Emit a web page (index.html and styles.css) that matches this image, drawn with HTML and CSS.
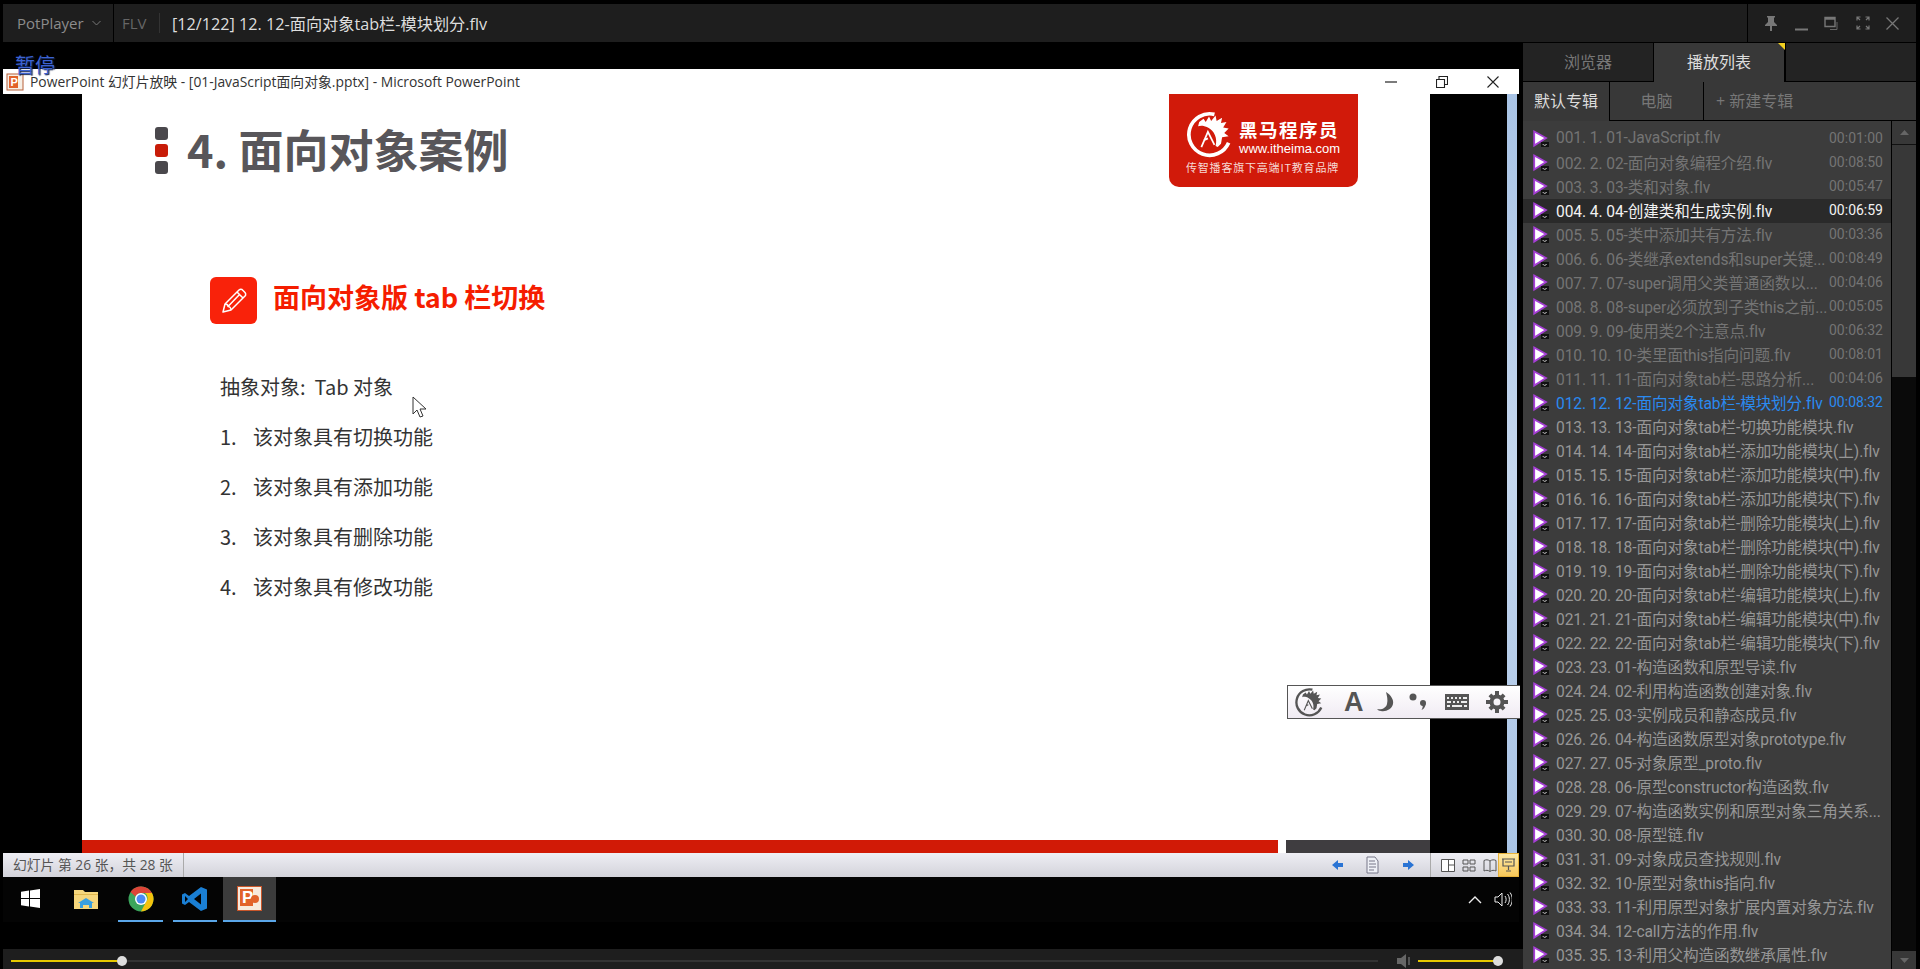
FILE: index.html
```html
<!DOCTYPE html>
<html lang="zh-CN">
<head>
    <meta charset="UTF-8">
    <title>PotPlayer</title>
    <link rel="stylesheet" href="styles.css">
</head>
<body>

<svg class="defs" width="0" height="0">
    <symbol id="play" viewBox="0 0 16 18">
        <polygon points="1.2,1.5 13,8 1.2,15.5" fill="#fff" stroke="#a63fd6" stroke-width="1.8"/>
        <rect x="8" y="12" width="8" height="5" fill="#111"/>
        <path d="M9.5 14.5h1.5v1h1.5v-1h1.5" stroke="#bbb" stroke-width=".7" fill="none"/>
    </symbol>
    <symbol id="horse" viewBox="0 0 44 44">
        <path d="M27 4A19 19 0 1 0 40 30" fill="none" stroke="currentColor" stroke-width="3.4"/>
        <path d="M13 11l4-3 2 3 3-5 2 4 4-5 1 5 5-3-1 5 5-1-3 5 5 1-4 4 4 3-6 1-1 6-3 3-2-1c2-7-1-14-7-17-4-2-7-2-9-1z" fill="currentColor"/>
        <path d="M15 34l6-14 6 12M21 26l-4 2" fill="none" stroke="currentColor" stroke-width="1.6"/>
    </symbol>
</svg>

<!-- Top bar -->
<div class="topbar">
    <div class="brand">PotPlayer
        <svg width="9" height="6" viewBox="0 0 9 6"><path d="M.5 1l4 4 4-4" fill="none" stroke="#777"/></svg>
    </div>
    <div class="format">FLV</div>
    <div class="now-title">[12/122] 12. 12-面向对象tab栏-模块划分.flv</div>
    <div class="win-controls">
        <svg width="14" height="15" viewBox="0 0 14 15"><path d="M3 0h8v1l-1 1v4l3 3v1H8v5H6v-5H1V9l3-3V2L3 1z" fill="#777"/></svg>
        <svg width="13" height="15" viewBox="0 0 13 15"><path d="M0 13.5h13" stroke="#777" stroke-width="2"/></svg>
        <svg width="15" height="15" viewBox="0 0 15 15"><path d="M1 1.5h10v9H1z M1 3h10" fill="none" stroke="#777" stroke-width="1.4"/><path d="M13 6v7.5H6" fill="none" stroke="#666"/></svg>
        <svg width="14" height="14" viewBox="0 0 14 14"><path d="M1 4.500V1h3.500M9.500 1H13v3.500M13 9.500V13H9.500M4.500 13H1V9.500M1 1l3 3M13 1l-3 3M13 13l-3-3M1 13l3-3" fill="none" stroke="#777" stroke-width="1.2"/></svg>
        <svg width="13" height="13" viewBox="0 0 13 13"><path d="M.5.500l12 12M12.500.500l-12 12" stroke="#777" stroke-width="1.3"/></svg>
    </div>
</div>

<div class="main">

    <!-- Video area -->
    <div class="video">
        <div class="osd">暂停</div>

        <div class="ppt-window">
            <div class="ppt-title">
                <svg width="18" height="18" viewBox="0 0 18 18"><rect x="1" y="1" width="16" height="16" fill="#f6efe6" stroke="#b8613a"/><rect x="3" y="3" width="9" height="12" fill="#e2622a"/><text x="4.500" y="13" class="ppt-letter">P</text></svg>
                <span>PowerPoint 幻灯片放映 - [01-JavaScript面向对象.pptx] - Microsoft PowerPoint</span>
                <div class="ppt-controls">
                    <svg width="12" height="12" viewBox="0 0 12 12"><path d="M0 6h12" stroke="#222" stroke-width="1.2"/></svg>
                    <svg width="12" height="12" viewBox="0 0 12 12"><path d="M.5 3.500h8v8h-8z M3 3.500V.500h8.500v8H8.500" fill="none" stroke="#222" stroke-width="1.1"/></svg>
                    <svg width="12" height="12" viewBox="0 0 12 12"><path d="M.5.500l11 11M11.500.500l-11 11" stroke="#222" stroke-width="1.100"/></svg>
                </div>
            </div>

            <div class="slide-row">
                <div class="slide">
                    <div class="slide-body">
                        <div class="slide-head">
                            <div class="bullets"><i></i><i class="red"></i><i></i></div>
                            <h1 class="slide-title">4. 面向对象案例</h1>
                            <div class="logo">
                                <div class="logo-top">
                                    <svg class="logo-horse" width="48" height="48"><use href="#horse"/></svg>
                                    <div class="logo-words">
                                        <div class="logo-name">黑马程序员</div>
                                        <div class="logo-url">www.itheima.com</div>
                                    </div>
                                </div>
                                <div class="logo-tag">传智播客旗下高端IT教育品牌</div>
                            </div>
                        </div>

                        <div class="section-head">
                            <div class="pencil">
                                <svg width="30" height="30" viewBox="0 0 30 30"><g fill="none" stroke="#fff" stroke-width="1.500" stroke-linejoin="round"><path d="M4 26l2-8L20 4a3 3 0 0 1 3-.5l3 3a3 3 0 0 1 .5 3L12 24z"/><path d="M6 18c2 0 3 1 3 2.500 1.500 0 3 1.500 3 3.500M18 6l6 6M9 20.500L21 8"/></g></svg>
                            </div>
                            <h2 class="section-title">面向对象版 tab 栏切换</h2>
                        </div>

                        <div class="slide-text">
                            <p>抽象对象:&nbsp; Tab 对象</p>
                            <ol class="slide-list">
                                <li><span>1.</span>该对象具有切换功能</li>
                                <li><span>2.</span>该对象具有添加功能</li>
                                <li><span>3.</span>该对象具有删除功能</li>
                                <li><span>4.</span>该对象具有修改功能</li>
                            </ol>
                        </div>
                    </div>
                    <div class="slide-foot">
                        <div class="foot-red"></div>
                        <div class="foot-dark"></div>
                    </div>
                </div>
                <div class="side-strip"></div>
            </div>

            <div class="ppt-status">
                <div class="status-text">幻灯片 第 26 张，共 28 张</div>
                <div class="status-nav">
                    <svg width="12" height="12" viewBox="0 0 12 12"><path d="M0 6l6-5v3h5v4H6v3z" fill="#2a74d4"/></svg>
                    <svg width="18" height="18" viewBox="0 0 18 18"><path d="M3 1h8l3 4v12H3z" fill="#eef0f6" stroke="#778"/><path d="M5 5h6M5 8h7M5 11h7M5 14h5" stroke="#778"/></svg>
                    <svg width="12" height="12" viewBox="0 0 12 12"><path d="M12 6L6 1v3H1v4h5v3z" fill="#2a74d4"/></svg>
                </div>
                <div class="status-views">
                    <svg width="14" height="13" viewBox="0 0 14 13"><path d="M.5.500h13v12H.5zM7.500.500v12M7.500 6h6" fill="#fff" stroke="#555"/></svg>
                    <svg width="14" height="13" viewBox="0 0 14 13"><path d="M1 1h5v4H1zM8 1h5v4H8zM1 8h5v4H1zM8 8h5v4H8z" fill="none" stroke="#555"/></svg>
                    <svg width="14" height="13" viewBox="0 0 14 13"><path d="M7 2C5 .5 3 .5 1 1.500V12c2-1 4-1 6 .5 2-1.500 4-1.500 6-.5V1.500C11 .5 9 .5 7 2zM7 2v10" fill="none" stroke="#555"/></svg>
                    <div class="view-active">
                        <svg width="13" height="14" viewBox="0 0 13 14"><path d="M0 1h13M1 1v7h11V1M6.500 8v4M4 13h5M3 4h7" fill="none" stroke="#555" stroke-width="1.200"/></svg>
                    </div>
                </div>
            </div>
        </div>

        <!-- Windows taskbar inside the video -->
        <div class="taskbar">
            <div class="task-btn start">
                <svg width="19" height="19" viewBox="0 0 19 19"><path d="M0 2.700l8-1.100v7.400H0zM9 1.400L19 0v9H9zM0 10h8v7.400l-8-1.100zM9 10h10v9L9 17.600z" fill="#fff"/></svg>
            </div>
            <div class="task-btn folder">
                <svg width="24" height="20" viewBox="0 0 24 20"><path d="M0 1h9l2 2h13v17H0z" fill="#f6d77c"/><path d="M0 5h24v1H0z" fill="#e0b84e"/><path d="M6 19v-5l-2 0 8-5 8 5h-2v5h-3v-3H9v3z" fill="#3aa0e0"/></svg>
            </div>
            <div class="task-btn chrome on">
                <svg width="26" height="26" viewBox="0 0 26 26"><circle cx="13" cy="13" r="12.500" fill="#3ba55c"/><path d="M13 .5A12.500 12.500 0 0 1 24 7H13a6 6 0 0 0-5.500 3.500L2.500 6A12.500 12.500 0 0 1 13 .5z" fill="#dc4437"/><path d="M24 7a12.500 12.500 0 0 1-11 18.500L18 16a6 6 0 0 0-1-9z" fill="#f4c20d"/><circle cx="13" cy="13" r="6" fill="#fff"/><circle cx="13" cy="13" r="4.500" fill="#4a8af4"/></svg>
            </div>
            <div class="task-btn code on">
                <svg width="26" height="26" viewBox="0 0 26 26"><path d="M19 1l6 2.500v19L19 25 7 16l-4 3-3-1.500V8.500L3 7l4 3zM19 7.500L12 13l7 5.500z M3 10v6l3-3z" fill="#1a7fd4" fill-rule="evenodd"/></svg>
            </div>
            <div class="task-btn ppt on">
                <svg width="25" height="25" viewBox="0 0 25 25"><rect x=".5" y=".5" width="24" height="24" fill="#f7e9dc" stroke="#c9562a"/><rect x="3" y="3" width="13" height="17" fill="#e2622a"/><text x="5" y="17" class="ppt-letter big">P</text><circle cx="18" cy="13" r="4" fill="#e2622a"/></svg>
            </div>
            <div class="tray">
                <svg width="14" height="9" viewBox="0 0 14 9"><path d="M1 8l6-6 6 6" fill="none" stroke="#eee" stroke-width="1.400"/></svg>
                <svg width="18" height="17" viewBox="0 0 18 17"><path d="M1 6h3l4-4v13l-4-4H1z" fill="none" stroke="#eee"/><path d="M11 5c1.500 2 1.500 5 0 7M13.500 3c2.500 3 2.500 8 0 11M16 1.500c3 4 3 10 0 14" fill="none" stroke="#eee"/></svg>
            </div>
        </div>

        <!-- Seek bar -->
        <div class="seekbar">
            <div class="seek-track">
                <div class="seek-fill"></div>
                <div class="thumb"></div>
            </div>
            <svg class="vol-icon" width="14" height="14" viewBox="0 0 14 14"><path d="M0 4h4l5-4v14l-5-4H0z" fill="#666"/><path d="M12 3v8" stroke="#666" stroke-width="1.500"/></svg>
            <div class="vol-track">
                <div class="vol-fill"></div>
                <div class="thumb vol-thumb"></div>
            </div>
        </div>

        <!-- Floating toolbar over the slide -->
        <div class="float-tools">
            <svg class="tool-horse" width="30" height="30"><use href="#horse"/></svg>
            <span class="tool-a">A</span>
            <svg width="17" height="20" viewBox="0 0 17 20"><path d="M9 0c5 3 8 8 7 12-1 5-7 8-12 7-2 0-3-1-4-2 5 1 9-1 10-5 1-4 0-8-1-12z" fill="#555"/></svg>
            <svg width="18" height="18" viewBox="0 0 18 18"><circle cx="4" cy="4" r="3.500" fill="#555"/><circle cx="14" cy="10" r="3" fill="#555"/><path d="M16.500 10c.5 3-1.500 6-4 7 1-2 1.500-3 1-5z" fill="#555"/></svg>
            <svg class="tool-keys" width="24" height="16" viewBox="0 0 24 16"><rect width="24" height="16" fill="#555"/><path d="M2 3h2v2H2zM6 3h2v2H6zM10 3h2v2h-2zM14 3h2v2h-2zM18 3h4v2h-4zM2 7h4v2H2zM8 7h2v2H8zM12 7h2v2h-2zM16 7h6v2h-6zM2 11h3v2H2zM7 11h10v2H7zM19 11h3v2h-3z" fill="#eee"/></svg>
            <svg class="tool-gear" width="22" height="22" viewBox="0 0 22 22"><circle cx="11" cy="11" r="5.500" fill="none" stroke="#555" stroke-width="4"/><path d="M9 0h4v4H9zM9 18h4v4H9zM0 9h4v4H0zM18 9h4v4h-4zM2.500 5.300l2.800-2.800 2.800 2.800-2.800 2.800zM13.900 16.700l2.800-2.800 2.800 2.800-2.800 2.800zM2.500 16.700l2.800-2.800 2.800 2.800-2.800 2.800zM13.900 5.300l2.800-2.800 2.800 2.800-2.800 2.800z" fill="#555"/></svg>
        </div>

        <!-- Mouse cursor in the video -->
        <svg class="cursor" width="15" height="23" viewBox="0 0 15 23"><path d="M1 1v17l4-4 3 7 3-1-3-7h6z" fill="#fff" stroke="#333"/></svg>
    </div>

    <!-- Playlist panel -->
    <div class="panel">
        <div class="panel-tabs">
            <div class="panel-tab">浏览器</div>
            <div class="panel-tab active">播放列表<i class="corner"></i></div>
            <div class="panel-tab blank"></div>
        </div>
        <div class="album-tabs">
            <div class="album-tab active">默认专辑</div>
            <div class="album-tab pc">电脑</div>
            <div class="album-tab add">+ 新建专辑</div>
        </div>
        <div class="list-wrap">
            <ul class="playlist">
                <li class="played"><svg><use href="#play"/></svg><span class="name">001. 1. 01-JavaScript.flv</span><span class="time">00:01:00</span></li>
                <li class="played"><svg><use href="#play"/></svg><span class="name">002. 2. 02-面向对象编程介绍.flv</span><span class="time">00:08:50</span></li>
                <li class="played"><svg><use href="#play"/></svg><span class="name">003. 3. 03-类和对象.flv</span><span class="time">00:05:47</span></li>
                <li class="selected"><svg><use href="#play"/></svg><span class="name">004. 4. 04-创建类和生成实例.flv</span><span class="time">00:06:59</span></li>
                <li class="played"><svg><use href="#play"/></svg><span class="name">005. 5. 05-类中添加共有方法.flv</span><span class="time">00:03:36</span></li>
                <li class="played"><svg><use href="#play"/></svg><span class="name">006. 6. 06-类继承extends和super关键...</span><span class="time">00:08:49</span></li>
                <li class="played"><svg><use href="#play"/></svg><span class="name">007. 7. 07-super调用父类普通函数以...</span><span class="time">00:04:06</span></li>
                <li class="played"><svg><use href="#play"/></svg><span class="name">008. 8. 08-super必须放到子类this之前...</span><span class="time">00:05:05</span></li>
                <li class="played"><svg><use href="#play"/></svg><span class="name">009. 9. 09-使用类2个注意点.flv</span><span class="time">00:06:32</span></li>
                <li class="played"><svg><use href="#play"/></svg><span class="name">010. 10. 10-类里面this指向问题.flv</span><span class="time">00:08:01</span></li>
                <li class="played"><svg><use href="#play"/></svg><span class="name">011. 11. 11-面向对象tab栏-思路分析...</span><span class="time">00:04:06</span></li>
                <li class="current"><svg><use href="#play"/></svg><span class="name">012. 12. 12-面向对象tab栏-模块划分.flv</span><span class="time">00:08:32</span></li>
                <li><svg><use href="#play"/></svg><span class="name">013. 13. 13-面向对象tab栏-切换功能模块.flv</span></li>
                <li><svg><use href="#play"/></svg><span class="name">014. 14. 14-面向对象tab栏-添加功能模块(上).flv</span></li>
                <li><svg><use href="#play"/></svg><span class="name">015. 15. 15-面向对象tab栏-添加功能模块(中).flv</span></li>
                <li><svg><use href="#play"/></svg><span class="name">016. 16. 16-面向对象tab栏-添加功能模块(下).flv</span></li>
                <li><svg><use href="#play"/></svg><span class="name">017. 17. 17-面向对象tab栏-删除功能模块(上).flv</span></li>
                <li><svg><use href="#play"/></svg><span class="name">018. 18. 18-面向对象tab栏-删除功能模块(中).flv</span></li>
                <li><svg><use href="#play"/></svg><span class="name">019. 19. 19-面向对象tab栏-删除功能模块(下).flv</span></li>
                <li><svg><use href="#play"/></svg><span class="name">020. 20. 20-面向对象tab栏-编辑功能模块(上).flv</span></li>
                <li><svg><use href="#play"/></svg><span class="name">021. 21. 21-面向对象tab栏-编辑功能模块(中).flv</span></li>
                <li><svg><use href="#play"/></svg><span class="name">022. 22. 22-面向对象tab栏-编辑功能模块(下).flv</span></li>
                <li><svg><use href="#play"/></svg><span class="name">023. 23. 01-构造函数和原型导读.flv</span></li>
                <li><svg><use href="#play"/></svg><span class="name">024. 24. 02-利用构造函数创建对象.flv</span></li>
                <li><svg><use href="#play"/></svg><span class="name">025. 25. 03-实例成员和静态成员.flv</span></li>
                <li><svg><use href="#play"/></svg><span class="name">026. 26. 04-构造函数原型对象prototype.flv</span></li>
                <li><svg><use href="#play"/></svg><span class="name">027. 27. 05-对象原型_proto.flv</span></li>
                <li><svg><use href="#play"/></svg><span class="name">028. 28. 06-原型constructor构造函数.flv</span></li>
                <li><svg><use href="#play"/></svg><span class="name">029. 29. 07-构造函数实例和原型对象三角关系...</span></li>
                <li><svg><use href="#play"/></svg><span class="name">030. 30. 08-原型链.flv</span></li>
                <li><svg><use href="#play"/></svg><span class="name">031. 31. 09-对象成员查找规则.flv</span></li>
                <li><svg><use href="#play"/></svg><span class="name">032. 32. 10-原型对象this指向.flv</span></li>
                <li><svg><use href="#play"/></svg><span class="name">033. 33. 11-利用原型对象扩展内置对象方法.flv</span></li>
                <li><svg><use href="#play"/></svg><span class="name">034. 34. 12-call方法的作用.flv</span></li>
                <li><svg><use href="#play"/></svg><span class="name">035. 35. 13-利用父构造函数继承属性.flv</span></li>
            </ul>
            <div class="scrollbar">
                <div class="scroll-btn"><svg width="9" height="5" viewBox="0 0 9 5"><path d="M4.500 0L9 5H0z" fill="#666"/></svg></div>
                <div class="scroll-thumb"></div>
                <div class="scroll-track"></div>
                <div class="scroll-btn down"><svg width="9" height="5" viewBox="0 0 9 5"><path d="M4.500 5L9 0H0z" fill="#666"/></svg></div>
            </div>
        </div>
    </div>
</div>

</body>
</html>
```

FILE: styles.css
```css
/* General */
* {
    box-sizing: border-box;
}

body {
    margin: 0;
    height: 969px;
    overflow: hidden;
    background-color: #000;
    font-family: "Open Sans", "Noto Sans CJK SC", sans-serif;
}

.defs {
    position: absolute;
}

/* Top bar */
.topbar {
    display: flex;
    align-items: center;
    height: 38px;
    margin: 4px 4px 1px 3px;
    background-color: #1e1e1e;
}

.brand {
    display: flex;
    align-items: center;
    gap: 8px;
    width: 111px;
    height: 100%;
    padding-left: 14px;
    border-right: 1px solid #000;
    font-size: 15px;
    color: #8c8c8c;
}

.format {
    width: 38px;
    margin-left: 8px;
    border-right: 1px solid #333;
    font-size: 15px;
    color: #666;
}

.now-title {
    margin-left: 12px;
    font-size: 16.200px;
    color: #ddd;
}

.win-controls {
    display: flex;
    align-items: center;
    justify-content: space-between;
    width: 169px;
    height: 100%;
    margin-left: auto;
    padding: 0 17px 0 16px;
    border-left: 1px solid #000;
}

/* Video area */
.main {
    display: flex;
    height: 926px;
}

.video {
    position: relative;
    display: flex;
    flex-direction: column;
    width: 1520px;
    margin-left: 3px;
    padding-top: 26px;
}

.osd {
    position: absolute;
    top: 10px;
    left: 12px;
    z-index: 2;
    font-size: 20px;
    line-height: 26px;
    color: #3c62d2;
    text-shadow: 1px 1px 1px #10204a;
}

.ppt-window {
    width: 1516px;
}

.ppt-title {
    display: flex;
    align-items: center;
    height: 25px;
    padding-left: 3px;
    background-color: #fff;
    font-size: 13.850px;
    color: #333;
}

.ppt-title span {
    margin: 0 0 2px 6px;
}

.ppt-letter {
    font-family: "Liberation Sans", sans-serif;
    font-size: 11px;
    font-weight: 700;
    fill: #fff;
}

.ppt-letter.big {
    font-size: 17px;
}

.ppt-controls {
    display: flex;
    gap: 39px;
    margin-left: auto;
    padding-right: 20px;
}

.slide-row {
    display: flex;
    height: 759px;
    padding-left: 79px;
}

.slide {
    display: flex;
    flex-direction: column;
    width: 1348px;
    background-color: #fff;
    font-family: "Noto Sans CJK SC", sans-serif;
}

.slide-body {
    flex: 1;
}

.slide-head {
    display: flex;
    align-items: flex-start;
    height: 183px;
    padding: 0 72px 0 73px;
}

.bullets {
    display: flex;
    flex-direction: column;
    gap: 4px;
    margin-top: 33px;
}

.bullets i {
    display: block;
    width: 13px;
    height: 13px;
    border-radius: 3px;
    background-color: #4a484c;
}

.bullets i.red {
    background-color: #c81c08;
}

.slide-title {
    margin: 23px 0 0 19px;
    font-size: 45px;
    line-height: 64px;
    font-weight: 700;
    color: #58565a;
}

/* Logo */
.logo {
    width: 189px;
    height: 93px;
    margin-left: auto;
    padding: 16px 0 0 16px;
    border-radius: 0 0 10px 10px;
    background-color: #d11a0a;
    color: #fff;
}

.logo-top {
    display: flex;
    gap: 6px;
}

.logo-horse {
    flex: none;
}

.logo-words {
    padding-top: 7px;
}

.logo-name {
    font-size: 18.500px;
    line-height: 24px;
    font-weight: 700;
    letter-spacing: 1.500px;
}

.logo-url {
    font-family: "Liberation Sans", sans-serif;
    font-size: 13px;
    line-height: 15px;
}

.logo-tag {
    margin: 2px 0 0 1px;
    font-size: 11px;
    line-height: 14px;
    letter-spacing: .8px;
    color: #f6d9d4;
}

/* Section */
.section-head {
    display: flex;
    align-items: center;
    gap: 16px;
    margin-left: 128px;
}

.pencil {
    display: flex;
    align-items: center;
    justify-content: center;
    width: 47px;
    height: 47px;
    border-radius: 6px;
    background-color: #f9220a;
}

.section-title {
    margin: 0 0 8px;
    font-size: 27px;
    line-height: 39px;
    font-weight: 700;
    color: #f51d00;
}

.slide-text {
    margin: 48px 0 0 138px;
    font-size: 20px;
    line-height: 30px;
    color: #333;
}

.slide-text p {
    margin: 0;
}

.slide-list {
    margin: 20px 0 0;
    padding: 0;
    list-style-type: none;
}

.slide-list li {
    margin-bottom: 20px;
}

.slide-list span {
    display: inline-block;
    width: 33px;
}

.slide-foot {
    display: flex;
    height: 13px;
}

.foot-red {
    width: 1196px;
    background-color: #d11a06;
}

.foot-dark {
    width: 144px;
    margin-left: 8px;
    background-color: #3f3d40;
}

.side-strip {
    width: 10px;
    margin-left: 77px;
    background: linear-gradient(#a9c4e6, #c5d7ee 50%, #a9c4e6);
}

/* PowerPoint status bar */
.ppt-status {
    display: flex;
    align-items: center;
    height: 24px;
    padding-left: 1px;
    background: linear-gradient(#eeeef4, #d3d3da);
}

.status-text {
    width: 180px;
    height: 100%;
    padding-left: 9px;
    border-right: 1px solid #aaa;
    font-size: 13.800px;
    line-height: 23px;
    color: #555;
}

.status-nav {
    display: flex;
    align-items: center;
    gap: 20px;
    height: 100%;
    margin-left: auto;
    padding-right: 16px;
    border-right: 1px solid #aaa;
}

.status-views {
    display: flex;
    align-items: center;
    gap: 7px;
    height: 100%;
    padding-left: 10px;
}

.view-active {
    display: flex;
    align-items: center;
    justify-content: center;
    width: 21px;
    height: 100%;
    margin-left: -6px;
    border: 1px solid #e8b33c;
    background: linear-gradient(#fde9a8, #f8c85a);
}

/* Windows taskbar */
.taskbar {
    display: flex;
    height: 45px;
    width: 1516px;
    background-color: #040404;
}

.task-btn {
    display: flex;
    align-items: center;
    justify-content: center;
    border-bottom: 2px solid transparent;
}

.task-btn.on {
    border-bottom-color: #5aa6e8;
}

.start {
    width: 54px;
}

.folder {
    width: 58px;
}

.chrome {
    width: 45px;
    margin-left: 3px;
}

.code {
    width: 44px;
    margin-left: 10px;
}

.ppt {
    width: 53px;
    margin-left: 6px;
    background-color: #3c3c3c;
}

.tray {
    display: flex;
    align-items: center;
    gap: 12px;
    margin-left: auto;
    padding-right: 7px;
}

/* Seek bar */
.seekbar {
    display: flex;
    align-items: center;
    height: 20px;
    margin-top: 27px;
    padding: 3px 0 0 8px;
    background-color: #1e1e1e;
}

.seek-track {
    position: relative;
    width: 1367px;
    height: 2px;
    background-color: #333;
}

.seek-fill {
    width: 111px;
    height: 2px;
    background-color: #e6c800;
}

.thumb {
    position: absolute;
    top: -4px;
    left: 106px;
    width: 10px;
    height: 10px;
    border-radius: 50%;
    background-color: #ddd;
}

.vol-icon {
    margin-left: 19px;
}

.vol-track {
    position: relative;
    width: 80px;
    height: 2px;
    margin-left: 7px;
    background-color: #333;
}

.vol-fill {
    width: 78px;
    height: 2px;
    background-color: #e6c800;
}

.vol-thumb {
    left: 75px;
}

/* Floating tools */
.float-tools {
    position: absolute;
    top: 642px;
    left: 1284px;
    display: flex;
    align-items: center;
    gap: 15px;
    width: 233px;
    height: 34px;
    padding-left: 6px;
    border: 1px solid #555;
    border-right: none;
    background: linear-gradient(#fff, #f0ebf3);
}

.tool-horse {
    color: #555;
}

.tool-a {
    width: 18px;
    margin: 0 0 0 5px;
    font-family: "Liberation Sans", sans-serif;
    font-size: 27px;
    line-height: 30px;
    font-weight: 700;
    color: #555;
}

.tool-keys {
    margin-left: 3px;
}

.tool-gear {
    margin-left: 2px;
}

.cursor {
    position: absolute;
    top: 353px;
    left: 409px;
}

/* Playlist panel */
.panel {
    display: flex;
    flex-direction: column;
    width: 393px;
}

.panel-tabs {
    display: flex;
    height: 39px;
    gap: 1px;
    border-bottom: 1px solid #000;
}

.panel-tab {
    width: 130px;
    background-color: #232323;
    font-size: 16px;
    line-height: 38px;
    text-align: center;
    color: #777;
}

.panel-tab.active {
    position: relative;
    height: 39px;
    background-color: #383838;
    color: #ddd;
}

.panel-tab.blank {
    flex: 1;
    margin-left: 1px;
}

.corner {
    position: absolute;
    top: 0;
    right: -1px;
    border-top: 7px solid #f2d020;
    border-left: 7px solid transparent;
}

.album-tabs {
    display: flex;
    height: 39px;
    background-color: #383838;
    font-size: 16px;
    line-height: 38px;
    color: #777;
}

.album-tab {
    border-bottom: 1px solid #000;
    border-right: 1px solid #000;
    text-align: center;
}

.album-tab.active {
    width: 87px;
    border-bottom: none;
    color: #ddd;
}

.pc {
    width: 94px;
}

.add {
    flex: 1;
    padding-left: 12px;
    border-right: none;
    text-align: left;
}

.list-wrap {
    display: flex;
    flex: 1;
    min-height: 0;
}

.playlist {
    width: 368px;
    margin: 0;
    padding: 6px 0 0;
    list-style-type: none;
    background-color: #3c3c3c;
    font-family: Roboto, "Noto Sans CJK SC", sans-serif;
    font-size: 15.600px;
    letter-spacing: -.1px;
    color: #969696;
}

.playlist li {
    display: flex;
    align-items: center;
    height: 24px;
    padding: 0 8px 0 10px;
    white-space: nowrap;
}

.playlist svg {
    flex: none;
    width: 16px;
    height: 18px;
    margin-right: 7px;
}

.playlist .name,
.playlist .time {
    padding-bottom: 2px;
}

.playlist .time {
    margin-left: auto;
    font-size: 14px;
    letter-spacing: 0;
}

.playlist .played {
    color: #747474;
}

.playlist .selected {
    background-color: #2a2a2a;
    color: #f2f2f2;
}

.playlist .current {
    color: #2a8af0;
}

.scrollbar {
    display: flex;
    flex-direction: column;
    width: 24px;
    margin-left: 1px;
}

.scroll-btn {
    display: flex;
    align-items: center;
    justify-content: center;
    height: 24px;
    border-bottom: 1px solid #111;
    background-color: #383838;
}

.scroll-btn.down {
    height: 18px;
    border-bottom: none;
}

.scroll-thumb {
    height: 232px;
    background-color: #383838;
}

.scroll-track {
    flex: 1;
    background-color: #0a0a0a;
}
```
